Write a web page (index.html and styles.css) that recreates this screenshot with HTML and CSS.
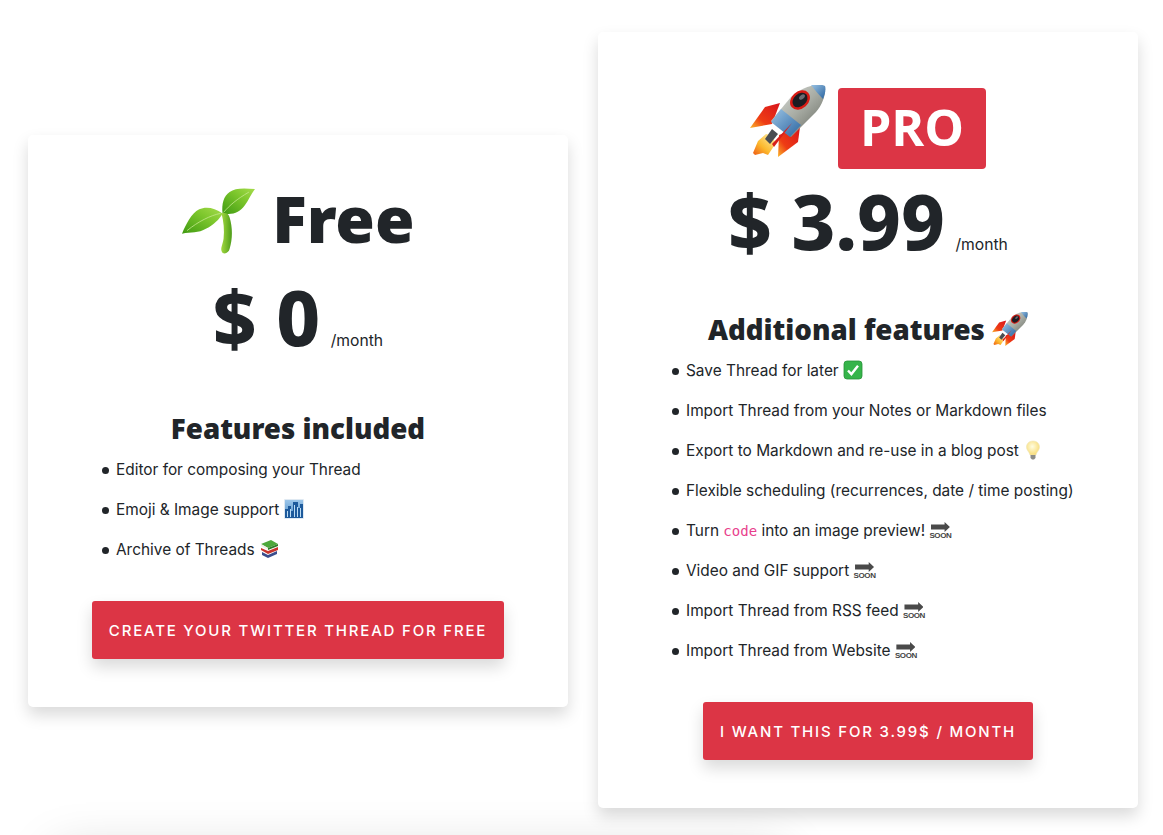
FILE: index.html
```html
<!DOCTYPE html>
<html lang="en">
<head>
<meta charset="utf-8">
<title>Pricing</title>
<link rel="stylesheet" href="styles.css">
</head>
<body>
<svg class="defs" width="0" height="0" aria-hidden="true">
  <defs>
    <linearGradient id="leaf" x1="0" y1="1" x2="1" y2="0"><stop offset="0" stop-color="#3f9a12"/><stop offset=".6" stop-color="#7cc62c"/><stop offset="1" stop-color="#a6dc4c"/></linearGradient>
    <linearGradient id="stem" x1="0" y1="0" x2="1" y2="0"><stop offset="0" stop-color="#a2d840"/><stop offset="1" stop-color="#4d9c18"/></linearGradient>
    <linearGradient id="body" x1="0" y1="0" x2="1" y2="1"><stop offset="0" stop-color="#e4e6e2"/><stop offset=".5" stop-color="#a8aca4"/><stop offset="1" stop-color="#5c6058"/></linearGradient>
    <linearGradient id="blue" x1="0" y1="0" x2="1" y2="1"><stop offset="0" stop-color="#9cc4e4"/><stop offset="1" stop-color="#2a64a0"/></linearGradient>
    <linearGradient id="fin" x1="1" y1="0" x2="0" y2="1"><stop offset="0" stop-color="#d8141c"/><stop offset=".65" stop-color="#ee3c14"/><stop offset="1" stop-color="#fcb82c"/></linearGradient>
    <linearGradient id="flame" x1="1" y1="0" x2="0" y2="1"><stop offset="0" stop-color="#fff6b8"/><stop offset=".6" stop-color="#fcb82c"/><stop offset="1" stop-color="#ee5a14"/></linearGradient>
    <linearGradient id="city" x1="0" y1="0" x2="0" y2="1"><stop offset="0" stop-color="#9cc6ea"/><stop offset="1" stop-color="#4f8fc8"/></linearGradient>
    <radialGradient id="glow" cx=".45" cy=".4" r=".6"><stop offset="0" stop-color="#fffde0"/><stop offset="1" stop-color="#f8dc78"/></radialGradient>
    <symbol id="sprout" viewBox="0 0 73 66">
      <path d="M72 1C60 0 52 0 47 4c-6 4-8 12-7 21 10 2 17-1 22-8 4-5 6-11 10-16z" fill="url(#leaf)"/>
      <path d="M40 25C32 19 23 18 17 21 9 25 4 36 0 45c9-2 16 0 24-5 7-4 13-9 16-15z" fill="url(#leaf)"/>
      <path d="M41 24C47 17 54 11 66 4M38 25C28 27 16 33 5 42" fill="none" stroke="#c4e88c" stroke-width=".8"/>
      <path d="M39 25c4-1 7 0 8 4 3 10 3 21 0 31-1 5-7 6-8 2-1-3 1-6 2-12 1-9 0-17-2-25z" fill="url(#stem)"/>
    </symbol>
    <symbol id="rocket" viewBox="0 0 76 72">
      <path d="M30 18 15 22 0 43l22-4z" fill="url(#fin)"/>
      <path d="M50 42l-2 15-20 15 1-22z" fill="url(#fin)"/>
      <path d="M16 49 8 56 3 68l2 2 8-2 5 2 4-6 4-6-5-8z" fill="url(#flame)"/>
      <path d="M75 1c1 8-2 18-9 26L41 52 21 36 41 12C50 3 64-2 75 1z" fill="url(#body)"/>
      <path d="M75 1c-4-2-10-2-14-1 4 5 8 10 12 14 2-5 3-9 2-13z" fill="url(#blue)"/>
      <path d="M31 24 21 37l19 15 11-12z" fill="url(#blue)"/>
      <ellipse cx="50" cy="15" rx="11" ry="8.500" transform="rotate(-42 50 15)" fill="#d81a14"/>
      <ellipse cx="50" cy="15" rx="8.500" ry="6.200" transform="rotate(-42 50 15)" fill="#1c1c22"/>
      <ellipse cx="52" cy="12" rx="3.400" ry="2" transform="rotate(-42 52 12)" fill="#6a6a72"/>
      <path d="M22 44l6 5-8 10-5-5z" fill="#4a4d52"/>
      <path d="M42 38 24 62l-2-3z" fill="#d8201c"/>
    </symbol>
    <symbol id="cityscape" viewBox="0 0 20 20">
      <rect width="20" height="20" rx="1" fill="#dfe9f2"/>
      <rect x="1" y="1" width="18" height="18" fill="url(#city)"/>
      <path d="M1 19v-9h3V7h3v5h2V3h5v6h2V5h3v14z" fill="#1d5a9c"/>
      <path d="M3 12h1v6H3zm3-2h1v8H6zm4-4h1v12h-1zm3 2h1v10h-1zm3 1h1v9h-1z" fill="#bcdcf4"/>
    </symbol>
    <symbol id="books" viewBox="0 0 20 20">
      <path d="M2 5 12 1l7 4-10 4z" fill="#4ea83c"/>
      <path d="M2 5l7 4v2L2 7z" fill="#f0efe6"/>
      <path d="M9 9l10-4v2L9 11z" fill="#2f7d28"/>
      <path d="M2 9l7 3 10-4v3L9 15l-7-4z" fill="#c8342c"/>
      <path d="M3 13l6 3 9-4v3l-9 4-6-3z" fill="#3a4d8c"/>
    </symbol>
    <symbol id="check" viewBox="0 0 20 20">
      <rect x="1" y="1" width="18" height="18" rx="3" fill="#35b44a" stroke="#279239" stroke-width=".8"/>
      <path d="M5 10.500l3.400 3.600L15 5.800" fill="none" stroke="#fff" stroke-width="2.400"/>
    </symbol>
    <symbol id="bulb" viewBox="0 0 20 20">
      <path d="M10 1c-4 0-6.500 2.800-6.500 6 0 3.500 3 5 3.500 8h6c.5-3 3.500-4.500 3.500-8 0-3.200-2.500-6-6.500-6z" fill="url(#glow)" stroke="#efe6b8" stroke-width=".6"/>
      <path d="M7.500 15h5v3l-1.500 1.500H9L7.500 18z" fill="#8c8c88"/>
    </symbol>
  </defs>
</svg>
<main class="pricing">
  <section class="card card-free">
    <h1 class="plan-name"><svg class="emoji-sprout"><use href="#sprout"/></svg> Free</h1>
    <p class="price"><span class="amount">$ 0</span> <small class="period">/month</small></p>
    <h3 class="features-title">Features included</h3>
    <ul class="features">
      <li>Editor for composing your Thread</li>
      <li>Emoji &amp; Image support <svg class="emoji"><use href="#cityscape"/></svg></li>
      <li>Archive of Threads <svg class="emoji"><use href="#books"/></svg></li>
    </ul>
    <div class="action"><a class="btn" href="#">Create your Twitter Thread for free</a></div>
  </section>
  <section class="card card-pro">
    <h1 class="plan-name plan-pro"><svg class="emoji-rocket"><use href="#rocket"/></svg><span class="badge">PRO</span></h1>
    <p class="price"><span class="amount">$ 3.99</span> <small class="period">/month</small></p>
    <h3 class="features-title">Additional features <svg class="emoji-title"><use href="#rocket"/></svg></h3>
    <ul class="features">
      <li>Save Thread for later <svg class="emoji"><use href="#check"/></svg></li>
      <li>Import Thread from your Notes or Markdown files</li>
      <li>Export to Markdown and re-use in a blog post <svg class="emoji"><use href="#bulb"/></svg></li>
      <li>Flexible scheduling (recurrences, date / time posting)</li>
      <li>Turn <code>code</code> into an image preview! <span class="soon"><span class="arrow"></span><span class="soon-text">SOON</span></span></li>
      <li>Video and GIF support <span class="soon"><span class="arrow"></span><span class="soon-text">SOON</span></span></li>
      <li>Import Thread from RSS feed <span class="soon"><span class="arrow"></span><span class="soon-text">SOON</span></span></li>
      <li>Import Thread from Website <span class="soon"><span class="arrow"></span><span class="soon-text">SOON</span></span></li>
    </ul>
    <div class="action"><a class="btn" href="#">I want this for 3.99$ / month</a></div>
  </section>
</main>
<section class="next"></section>
</body>
</html>
```
FILE: styles.css
```css
html, body { margin: 0; height: 835px; overflow: hidden; background: #fff; }
body { font-family: Inter, "Liberation Sans", sans-serif; font-size: 16px; color: #212529; }
.defs { position: absolute; }
.pricing { display: flex; align-items: center; gap: 30px; padding: 32px 25px 0 28px; position: relative; z-index: 1; }
.card { width: 540px; box-sizing: border-box; padding: 44px 48px 48px; background: #fff; border-radius: 5px; box-shadow: 0 8px 16px rgba(0,0,0,.15); }
.card-free { margin-top: 2px; }
.card-pro { padding-top: 56px; }
.plan-name { margin: 0; font-family: "Noto Sans", sans-serif; font-weight: 900; font-size: 64px; line-height: 80px; text-align: center; color: #212529; }
.plan-pro { display: flex; justify-content: center; align-items: center; gap: 12px; height: 81px; }
.emoji-sprout { width: 74px; height: 67px; vertical-align: -12px; }
.emoji-rocket { width: 76px; height: 72px; margin-top: -15px; }
.badge { width: 148px; height: 77px; padding-bottom: 4px; display: flex; align-items: center; justify-content: center; background: #dc3545; color: #fff; border-radius: 4px; font-family: "Open Sans", sans-serif; font-weight: 700; font-size: 50px; }
.price { margin: 10px 0 0; text-align: center; line-height: 96px; height: 96px; }
.card-pro .price { margin-top: 4px; }
.amount { font-family: "Noto Sans", sans-serif; font-weight: 800; font-size: 76px; }
.period { font-size: 15.7px; margin-left: 6px; }
.features-title { margin: 43px 0 0; font-family: "Noto Sans", sans-serif; font-weight: 900; font-size: 27.7px; line-height: 40px; text-align: center; }
.card-pro .features-title { margin-top: 40px; }
.emoji-title { width: 36px; height: 34px; vertical-align: -6px; }
.features { margin: 0; padding: 0 0 0 40px; list-style: none; font-size: 15.4px; }
.features li { height: 24px; line-height: 24px; margin-top: 16px; }
.features li:first-child { margin-top: 10px; }
.features li::before { content: ""; display: inline-block; width: 7px; height: 7px; margin: 0 7px 1px -14px; border-radius: 50%; background: #212529; }
.emoji { width: 20px; height: 20px; vertical-align: -4px; }
code { font-family: "DejaVu Sans Mono", monospace; font-size: 14px; color: #e83e8c; }
.soon { display: inline-flex; flex-direction: column; align-items: center; width: 22px; vertical-align: 4px; color: #444; }
.arrow { width: 19px; height: 10px; background: #4a4a4a; clip-path: polygon(0 25%, 72% 25%, 72% 0, 100% 50%, 72% 100%, 72% 75%, 0 75%); }
.soon-text { font-family: "Liberation Sans", sans-serif; font-size: 8px; line-height: 7px; font-weight: 700; letter-spacing: -.4px; }
.action { display: flex; justify-content: center; margin-top: 39px; }
.btn { display: block; height: 58px; line-height: 60px; padding: 0 17px; background: #dc3545; color: #fff; border-radius: 3px; text-transform: uppercase; letter-spacing: 1.8px; font-size: 15px; font-weight: 500; text-decoration: none; box-shadow: 0 8px 16px rgba(0,0,0,.15); }
.next { width: 730px; height: 300px; margin: 28px 0 0 55px; background: #fff; box-shadow: 0 16px 48px rgba(0,0,0,.175); }
```
